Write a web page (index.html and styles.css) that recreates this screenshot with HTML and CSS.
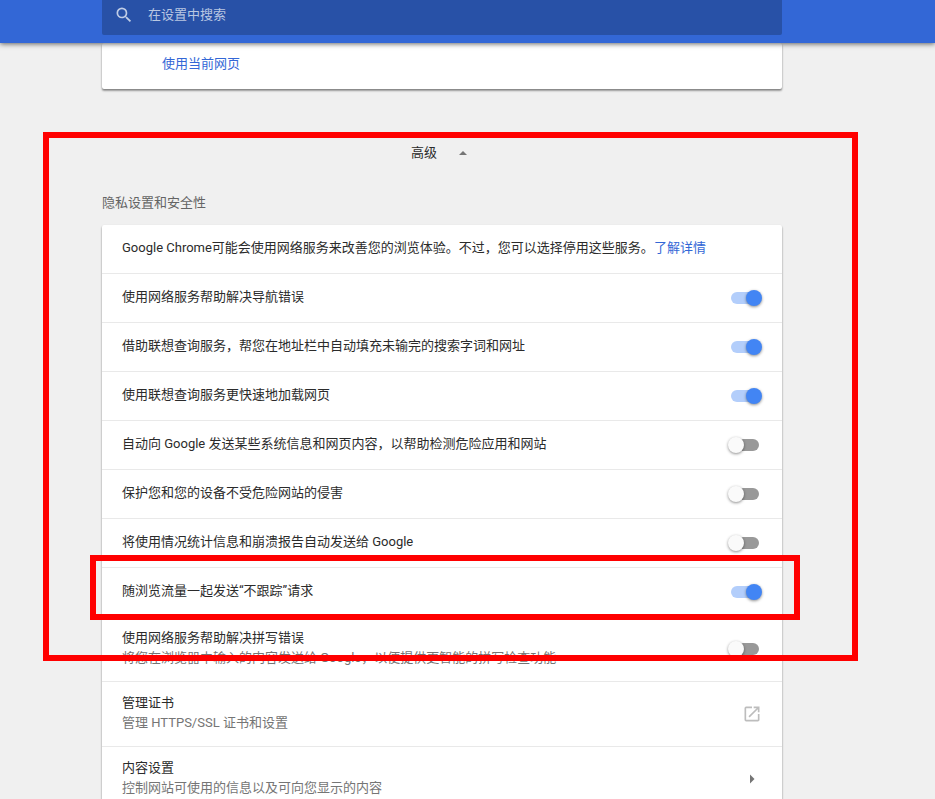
FILE: index.html
```html
<!DOCTYPE html>
<html lang="zh-CN">
<head>
<meta charset="utf-8">
<meta name="viewport" content="width=device-width, initial-scale=1">
<title>设置</title>
<link rel="stylesheet" href="styles.css">
</head>
<body>
<header class="toolbar">
  <label class="search column">
    <svg class="search-icon" viewBox="0 0 24 24" aria-hidden="true"><path d="M15.5 14h-.79l-.28-.27A6.47 6.47 0 0 0 16 9.5 6.5 6.5 0 1 0 9.5 16c1.61 0 3.09-.59 4.23-1.57l.27.28v.79l5 4.99L20.49 19l-4.99-5zm-6 0C7.01 14 5 11.99 5 9.5S7.01 5 9.5 5 14 7.01 14 9.5 11.99 14 9.5 14z"/></svg>
    <input class="search-input" type="text" placeholder="在设置中搜索" aria-label="在设置中搜索">
  </label>
</header>
<main class="content">
  <section class="card card-startup column">
    <a class="link" href="#">使用当前网页</a>
  </section>
  <section class="advanced column">
    <button class="advanced-toggle" type="button">高级
      <svg class="icon" viewBox="0 0 20 20" aria-hidden="true"><path d="M6 12l4-4 4 4z"/></svg>
    </button>
    <h2 class="section-title">隐私设置和安全性</h2>
    <div class="card">
      <p class="row">
        <span class="text">Google Chrome可能会使用网络服务来改善您的浏览体验。不过，您可以选择停用这些服务。<a class="link" href="#">了解详情</a></span>
      </p>
      <label class="row"><span class="text">使用网络服务帮助解决导航错误</span><input class="switch" type="checkbox" checked></label>
      <label class="row"><span class="text">借助联想查询服务，帮您在地址栏中自动填充未输完的搜索字词和网址</span><input class="switch" type="checkbox" checked></label>
      <label class="row"><span class="text">使用联想查询服务更快速地加载网页</span><input class="switch" type="checkbox" checked></label>
      <label class="row"><span class="text">自动向 Google 发送某些系统信息和网页内容，以帮助检测危险应用和网站</span><input class="switch" type="checkbox"></label>
      <label class="row"><span class="text">保护您和您的设备不受危险网站的侵害</span><input class="switch" type="checkbox"></label>
      <label class="row"><span class="text">将使用情况统计信息和崩溃报告自动发送给 Google</span><input class="switch" type="checkbox"></label>
      <label class="row marked"><span class="text">随浏览流量一起发送“不跟踪”请求</span><input class="switch" type="checkbox" checked></label>
      <label class="row row-tall"><span class="text">使用网络服务帮助解决拼写错误<small class="secondary">将您在浏览器中输入的内容发送给 Google，以便提供更智能的拼写检查功能</small></span><input class="switch" type="checkbox"></label>
      <button class="row row-tall" type="button"><span class="text">管理证书<small class="secondary">管理 HTTPS/SSL 证书和设置</small></span>
        <svg class="icon icon-external" viewBox="0 0 24 24" aria-hidden="true"><path d="M19 19H5V5h7V3H5a2 2 0 0 0-2 2v14a2 2 0 0 0 2 2h14c1.1 0 2-.9 2-2v-7h-2v7zM14 3v2h3.59l-9.83 9.83 1.41 1.41L19 6.41V10h2V3h-7z"/></svg>
      </button>
      <button class="row row-tall" type="button"><span class="text">内容设置<small class="secondary">控制网站可使用的信息以及可向您显示的内容</small></span>
        <svg class="icon" viewBox="0 0 20 20" aria-hidden="true"><path d="M8 5.500l4.500 4.500-4.500 4.500z"/></svg>
      </button>
    </div>
    <div class="highlight" aria-hidden="true"></div>
  </section>
</main>
</body>
</html>
```
FILE: styles.css
```css
* {
  box-sizing: border-box;
}

body {
  display: flex;
  flex-direction: column;
  height: 100vh;
  margin: 0;
  overflow: hidden;
  background: #f0f0f0;
  color: #2b2b2b;
  font: 13px/20px Roboto, "Noto Sans CJK SC", sans-serif;
}

button,
input {
  font: inherit;
  color: inherit;
}

.column {
  width: 100%;
  max-width: 680px;
  margin: 0 auto;
}

.toolbar {
  position: relative;
  z-index: 1;
  flex: none;
  padding: 0 51px 8px 0;
  background: #3367d6;
  box-shadow: 0 1px 5px rgba(0, 0, 0, 0.6);
}

.search {
  display: flex;
  align-items: center;
  gap: 14px;
  height: 35px;
  padding: 0 12px 6px;
  border-radius: 0 0 2px 2px;
  background: #2851a7;
}

.search-icon {
  flex: none;
  width: 20px;
  height: 20px;
  fill: #c0cde6;
}

.search-input {
  flex: 1;
  min-width: 0;
  padding: 0;
  border: 0;
  outline: 0;
  background: none;
}

.search-input::placeholder {
  color: #b9c7e2;
  opacity: 1;
}

.content {
  flex: 1;
  min-height: 0;
  padding-right: 51px;
}

.card {
  border-radius: 2px;
  background: #fff;
  box-shadow: 0 2px 2px rgba(0, 0, 0, 0.3), 0 1px 2px rgba(0, 0, 0, 0.25);
}

.card-startup {
  padding: 11px 60px 15px;
}

.link {
  color: #3367d6;
  text-decoration: none;
}

.advanced {
  position: relative;
  padding-top: 54px;
}

.advanced-toggle {
  display: flex;
  align-items: center;
  gap: 16px;
  margin: 0 auto;
  padding: 0;
  border: 0;
  background: none;
}

.icon {
  flex: none;
  width: 20px;
  height: 20px;
  fill: #757575;
}

.icon-external {
  fill: #bdbdbd;
}

.section-title {
  margin: 30px 0 12px;
  color: #646464;
  font: inherit;
}

.row {
  display: flex;
  align-items: center;
  justify-content: space-between;
  gap: 20px;
  width: 100%;
  min-height: 49px;
  margin: 0;
  padding: 0 20px;
  border: 0;
  border-top: 1px solid #e9e9e9;
  background: none;
  text-align: left;
}

.row:first-child {
  min-height: 48px;
  border-top: 0;
}

.row-tall {
  min-height: 65px;
}

.text {
  padding-bottom: 2px;
}

.secondary {
  display: block;
  color: #757575;
  font-size: inherit;
}

.switch {
  position: relative;
  flex: none;
  width: 28px;
  height: 12px;
  margin: 0 3px;
  border-radius: 6px;
  appearance: none;
  background: #999;
}

.switch::before {
  content: "";
  position: absolute;
  top: -2px;
  left: -3px;
  width: 16px;
  height: 16px;
  border-radius: 50%;
  background: #fafafa;
  box-shadow: 0 1px 3px rgba(0, 0, 0, 0.45);
}

.switch:checked {
  background: #b3cefb;
}

.switch:checked::before {
  left: 15px;
  background: #4285f4;
}

/* Red frames laid over the settings list. */
.highlight {
  position: absolute;
  top: 43px;
  right: -76px;
  left: -59px;
  height: 529px;
  border: 6px solid #f00;
  pointer-events: none;
}

.marked {
  position: relative;
}

.marked::after {
  content: "";
  position: absolute;
  top: -13px;
  right: -18px;
  bottom: -4px;
  left: -12px;
  border: 6px solid #f00;
  pointer-events: none;
}
```
